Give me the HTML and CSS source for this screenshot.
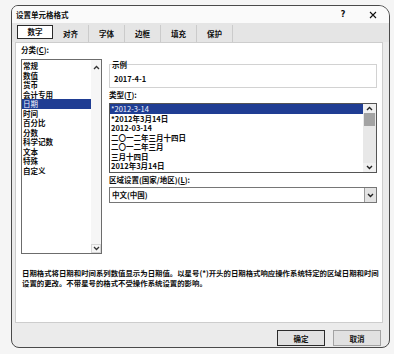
FILE: index.html
```
<!DOCTYPE html>
<html lang="zh-CN">
<head>
<meta charset="utf-8">
<title>设置单元格格式</title>
<link rel="stylesheet" href="styles.css">
</head>
<body>
<div class="dialog">
  <div class="titlebar">
    <span class="title">设置单元格格式</span>
    <span class="help">?</span>
    <span class="close"><svg width="8" height="8" viewBox="0 0 8 8"><path d="M1 1L7 7M7 1L1 7" stroke="#111" stroke-width="1.1" fill="none"/></svg></span>
  </div>
  <div class="tabs">
    <div class="tab active">数字</div>
    <div class="tab">对齐</div>
    <div class="tab">字体</div>
    <div class="tab">边框</div>
    <div class="tab">填充</div>
    <div class="tab">保护</div>
  </div>
  <div class="panel">
    <div class="main">
      <div class="left">
        <div class="label cat-label">分类(<u>C</u>):</div>
        <div class="catlist">
          <div class="items">
            <div class="item">常规</div>
            <div class="item">数值</div>
            <div class="item">货币</div>
            <div class="item">会计专用</div>
            <div class="item sel">日期</div>
            <div class="item">时间</div>
            <div class="item">百分比</div>
            <div class="item">分数</div>
            <div class="item">科学记数</div>
            <div class="item">文本</div>
            <div class="item">特殊</div>
            <div class="item">自定义</div>
          </div>
          <div class="sb plain">
            <span class="arrow"><svg width="7" height="5" viewBox="0 0 7 5"><polyline points="1,4 3.5,1.5 6,4" fill="none" stroke="#333" stroke-width="1.3"/></svg></span>
            <span class="arrow down-box"><svg width="7" height="5" viewBox="0 0 7 5"><polyline points="1,1 3.5,3.5 6,1" fill="none" stroke="#333" stroke-width="1.3"/></svg></span>
          </div>
        </div>
      </div>
      <div class="right">
        <fieldset class="sample">
          <legend>示例</legend>
          <div class="sample-value">2017-4-1</div>
        </fieldset>
        <div class="label type-label">类型(<u>T</u>):</div>
        <div class="typelist">
          <div class="items">
            <div class="item sel">*2012-3-14</div>
            <div class="item">*2012年3月14日</div>
            <div class="item">2012-03-14</div>
            <div class="item">二〇一二年三月十四日</div>
            <div class="item">二〇一二年三月</div>
            <div class="item">三月十四日</div>
            <div class="item">2012年3月14日</div>
          </div>
          <div class="sb track">
            <span class="btn"><svg width="7" height="5" viewBox="0 0 7 5"><polyline points="1,4 3.5,1.5 6,4" fill="none" stroke="#222" stroke-width="1.4"/></svg></span>
            <span class="thumb"></span>
            <span class="spacer"></span>
            <span class="btn"><svg width="7" height="5" viewBox="0 0 7 5"><polyline points="1,1 3.5,3.5 6,1" fill="none" stroke="#222" stroke-width="1.4"/></svg></span>
          </div>
        </div>
        <div class="label locale-label">区域设置(国家/地区)(<u>L</u>):</div>
        <div class="select">
          <span class="select-text">中文(中国)</span>
          <span class="dropbtn"><svg width="7" height="5" viewBox="0 0 7 5"><polyline points="1,1 3.5,3.5 6,1" fill="none" stroke="#222" stroke-width="1.4"/></svg></span>
        </div>
      </div>
    </div>
    <p class="desc">日期格式将日期和时间系列数值显示为日期值。以星号(*)开头的日期格式响应操作系统特定的区域日期和时间<br>设置的更改。不带星号的格式不受操作系统设置的影响。</p>
  </div>
  <div class="buttons">
    <button class="btn-ok">确定</button>
    <button class="btn-cancel">取消</button>
  </div>
</div>
</body>
</html>
```
FILE: styles.css
```
* { box-sizing: border-box; }
html, body { margin: 0; padding: 0; }
body {
  width: 394px;
  height: 354px;
  overflow: hidden;
  background: #f5f5f5;
  font-family: "Noto Sans CJK SC", "Noto Sans", sans-serif;
  font-size: 7.5px;
  font-weight: bold;
  color: #0d0d0d;
}
u { text-decoration: underline; text-underline-offset: 1px; text-decoration-thickness: 0.5px; }

.dialog {
  margin: 5px 0 0 11px;
  width: 379px;
  height: 343px;
  border: 1px solid #4a4a4a;
  border-radius: 7px 11px 8px 8px;
  background: #ebebeb;
  display: flex;
  flex-direction: column;
  overflow: hidden;
}

.titlebar {
  height: 17px;
  flex: none;
  background: #fafafa;
  display: flex;
  align-items: center;
  padding: 0 9px 0 4px;
}
.title { flex: 1; line-height: 10px; }
.help { width: 14px; text-align: center; font-size: 8px; line-height: 10px; margin-right: 16px; font-family: "DejaVu Sans", sans-serif; }
.close { width: 14px; display: flex; justify-content: center; align-items: center; }

.tabs {
  height: 19px;
  flex: none;
  background: #e5e5e5;
  display: flex;
  align-items: stretch;
  padding-left: 5px;
}
.tab {
  width: 36px;
  margin-top: 2px;
  display: flex;
  align-items: center;
  justify-content: center;
  border-right: 1px solid #cbcbcb;
  line-height: 10px;
}
.tab.active {
  align-self: flex-start;
  height: 14px;
  background: #fff;
  border: 1px solid #2a2a2a;
}

.panel {
  flex: none;
  height: 281px;
  margin: 0 6px 0 3px;
  background: #fff;
  border: 1px solid #cdcdcd;
  padding: 2px 5px 0;
}
.main { display: flex; gap: 7px; }
.left { width: 81px; flex: none; }
.label { line-height: 10px; height: 10px; white-space: nowrap; }
.cat-label { margin-bottom: 4px; }

.catlist {
  height: 195px;
  border: 1px solid #6c6c6c;
  display: flex;
}
.items { flex: 1; min-width: 0; }
.catlist .items { padding-top: 1px; }
.item {
  height: 9.5px;
  line-height: 9.5px;
  padding-left: 1px;
  white-space: nowrap;
}
.item.sel { background: #1f3d93; color: #f4f6ff; font-weight: normal; }

.sb.plain {
  width: 10px;
  flex: none;
  background: #f6f6f6;
  display: flex;
  flex-direction: column;
  justify-content: space-between;
  align-items: center;
  padding: 3px 0 0;
}
.arrow { display: flex; justify-content: center; align-items: center; width: 10px; height: 8px; }
.arrow.down-box { height: 9px; border: 1px solid #d6d6d6; }

.right { width: 268px; flex: none; padding-top: 15px; }
.sample {
  margin: 0;
  padding: 4px 4px 4px;
  border: 1px solid #d2d2d2;
  min-width: 0;
}
.sample legend { padding: 0; margin-left: -2px; line-height: 9.5px; }
.sample-value { line-height: 9.5px; }
.type-label { margin-top: 2px; }

.typelist {
  margin-top: 3px;
  height: 70px;
  border: 1px solid #555;
  display: flex;
}
.sb.track {
  width: 13px;
  flex: none;
  background: #e8e8e8;
  display: flex;
  flex-direction: column;
}
.sb.track .btn { height: 9px; display: flex; justify-content: center; align-items: center; background: #f0f0f0; }
.sb.track .thumb { height: 13px; margin: 0 1px; background: #a3a3a3; }
.sb.track .spacer { flex: 1; }

.locale-label { margin-top: 2px; }
.select {
  margin-top: 2px;
  height: 16px;
  border: 1px solid #767676;
  display: flex;
  align-items: center;
  padding-left: 2px;
}
.select-text { flex: 1; line-height: 10px; }
.dropbtn {
  width: 12px;
  height: 14px;
  background: #e3e3e3;
  border-left: 1px solid #9a9a9a;
  display: flex;
  justify-content: center;
  align-items: center;
}

.desc {
  margin: 14px 0 0;
  padding-left: 1px;
  font-size: 7.4px;
  line-height: 10px;
  white-space: nowrap;
}

.buttons {
  flex: 1;
  display: flex;
  justify-content: flex-end;
  align-items: flex-start;
  gap: 8px;
  padding: 7px 8px 0 0;
}
.buttons button {
  width: 48px;
  height: 16px;
  padding: 0;
  font: inherit;
  color: #111;
  background: #e1e1e1;
  border: 1px solid #a3a3a3;
}
.buttons .btn-ok { border-color: #2b2b2b; }
```
